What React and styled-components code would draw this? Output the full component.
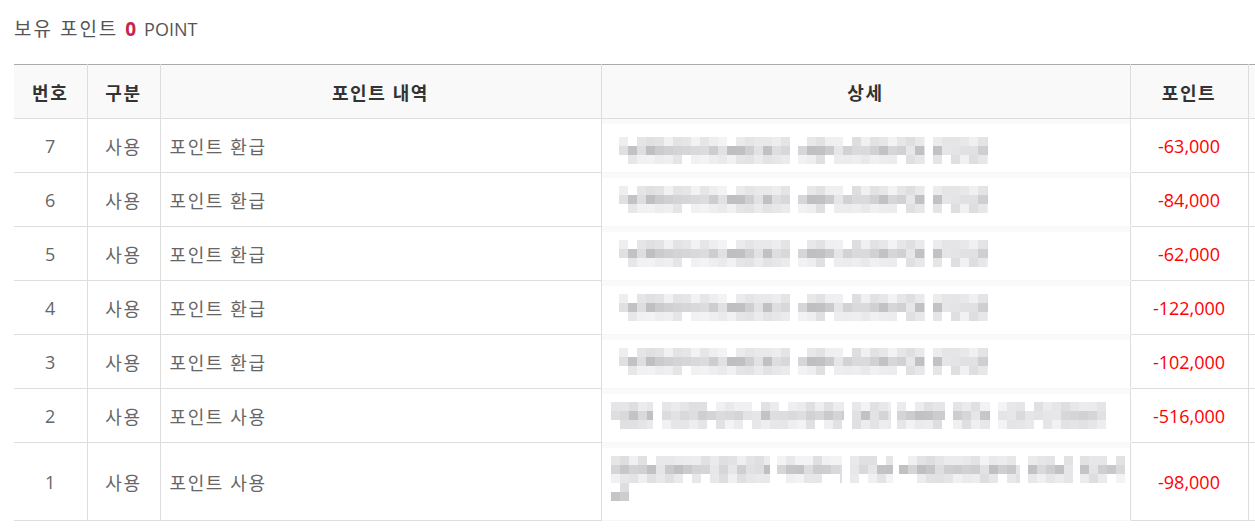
import styled, { createGlobalStyle } from "styled-components";

const GlobalStyle = createGlobalStyle`
  body {
    margin: 0;
    background: #fff;
    overflow: hidden;
    font-family: "Open Sans", "Noto Sans CJK KR", sans-serif;
  }
`;

const Page = styled.div`
  padding: 16px 0 0 14px;
  width: 1400px;
`;

const Title = styled.div`
  font-size: 19px;
  line-height: 26px;
  color: #555;
  margin-bottom: 22px;
`;

const Ko = styled.span`
  letter-spacing: ${(p) => p.$ls || 1.6}px;
`;

const Unit = styled.span`
  font-size: 18px;
`;

const Count = styled.b`
  color: #c7254e;
  font-weight: 700;
  margin: 0 3px 0 2px;
`;

const Table = styled.table`
  border-collapse: collapse;
  table-layout: fixed;
  width: 1334px;
  border-top: 1px solid #aaa;
  font-size: 18px;
`;

const Th = styled.th`
  height: 53px;
  background: #f9f9f9;
  color: #333;
  font-weight: 700;
  letter-spacing: 1.6px;
  border-bottom: 1px solid #ddd;
  border-left: 1px solid #ddd;
  padding: 0;
  &:first-child {
    border-left: none;
  }
`;

const Td = styled.td`
  height: ${(p) => p.$h || 53}px;
  border-bottom: 1px solid #ddd;
  border-left: 1px solid #ddd;
  color: #666;
  padding: 0 ${(p) => (p.$left ? "9px" : "0")};
  text-align: ${(p) => (p.$left ? "left" : "center")};
  vertical-align: middle;
  letter-spacing: ${(p) => (p.$ko ? "1.6px" : "0")};
  &:first-child {
    border-left: none;
  }
`;

const DetailTd = styled.td`
  border-bottom: 1px solid #f7f7f7;
  border-left: 1px solid #ddd;
  padding: 0;
  vertical-align: top;
  background: #fff;
`;

const PointTd = styled(Td)`
  color: #ff0000;
`;

function rng(seed) {
  let s = seed;
  return () => {
    s = (s * 9301 + 49297) % 233280;
    return s / 233280;
  };
}

// blurred mosaic for masked details
function Mosaic({ lines, seed }) {
  const r = rng(seed);
  const rects = [];
  lines.forEach((words, li) => {
    words.forEach(([x0, x1, rowsCount = 3]) => {
      for (let row = 0; row < rowsCount; row++) {
        for (let x = x0; x < x1; x += 9) {
          const v = r();
          let g;
          if (row === 1) g = 190 + Math.floor(v * 42);
          else g = 222 + Math.floor(v * 26);
          if (row !== 1 && v > 0.85) continue;
          rects.push(
            <rect
              key={`${li}-${row}-${x}`}
              x={x}
              y={li * 27 + row * 9}
              width={Math.min(9, x1 - x)}
              height={9}
              fill={`rgb(${g},${g},${g + 2})`}
            />
          );
        }
      }
    });
  });
  const h = lines.length * 27;
  return (
    <svg width="520" height={h} style={{ display: "block" }}>
      {rects}
    </svg>
  );
}

const MosaicWrap = styled.div`
  padding: ${(p) => p.$top}px 0 0 8px;
  border-top: 6px solid #fafafa;
  margin-top: -1px;
  background: #fff;
`;

const refundLine = [[[9, 180], [188, 315], [323, 378]]];

const rows = [
  { no: 7, title: "포인트 환급", point: "-63,000", lines: refundLine, seed: 11 },
  { no: 6, title: "포인트 환급", point: "-84,000", lines: refundLine, seed: 11 },
  { no: 5, title: "포인트 환급", point: "-62,000", lines: refundLine, seed: 11 },
  { no: 4, title: "포인트 환급", point: "-122,000", lines: refundLine, seed: 11 },
  { no: 3, title: "포인트 환급", point: "-102,000", lines: refundLine, seed: 11 },
  {
    no: 2,
    title: "포인트 사용",
    point: "-516,000",
    lines: [[[1, 43], [52, 234], [242, 281], [287, 335], [343, 380], [388, 496]]],
    seed: 27,
  },
  {
    no: 1,
    title: "포인트 사용",
    point: "-98,000",
    lines: [
      [[1, 160], [167, 232], [240, 283], [289, 410], [418, 463], [470, 515]],
      [[1, 19, 2]],
    ],
    seed: 53,
    h: 77,
  },
];

export default function App() {
  return (
    <>
      <GlobalStyle />
      <Page>
        <Title>
          <Ko $ls={2}>보유 포인트</Ko> <Count>0</Count> <Unit>POINT</Unit>
        </Title>
        <Table>
          <colgroup>
            <col style={{ width: 73 }} />
            <col style={{ width: 73 }} />
            <col style={{ width: 441 }} />
            <col style={{ width: 529 }} />
            <col style={{ width: 118 }} />
            <col />
          </colgroup>
          <thead>
            <tr>
              <Th>번호</Th>
              <Th>구분</Th>
              <Th>포인트 내역</Th>
              <Th>상세</Th>
              <Th>포인트</Th>
              <Th></Th>
            </tr>
          </thead>
          <tbody>
            {rows.map((row) => (
              <tr key={row.no}>
                <Td $h={row.h}>{row.no}</Td>
                <Td $h={row.h} $ko>
                  사용
                </Td>
                <Td $h={row.h} $left $ko>
                  {row.title}
                </Td>
                <DetailTd>
                  <MosaicWrap $top={row.no === 7 ? 13 : 8}>
                    <Mosaic lines={row.lines} seed={row.seed} />
                  </MosaicWrap>
                </DetailTd>
                <PointTd $h={row.h}>{row.point}</PointTd>
                <Td $h={row.h}></Td>
              </tr>
            ))}
          </tbody>
        </Table>
      </Page>
    </>
  );
}
